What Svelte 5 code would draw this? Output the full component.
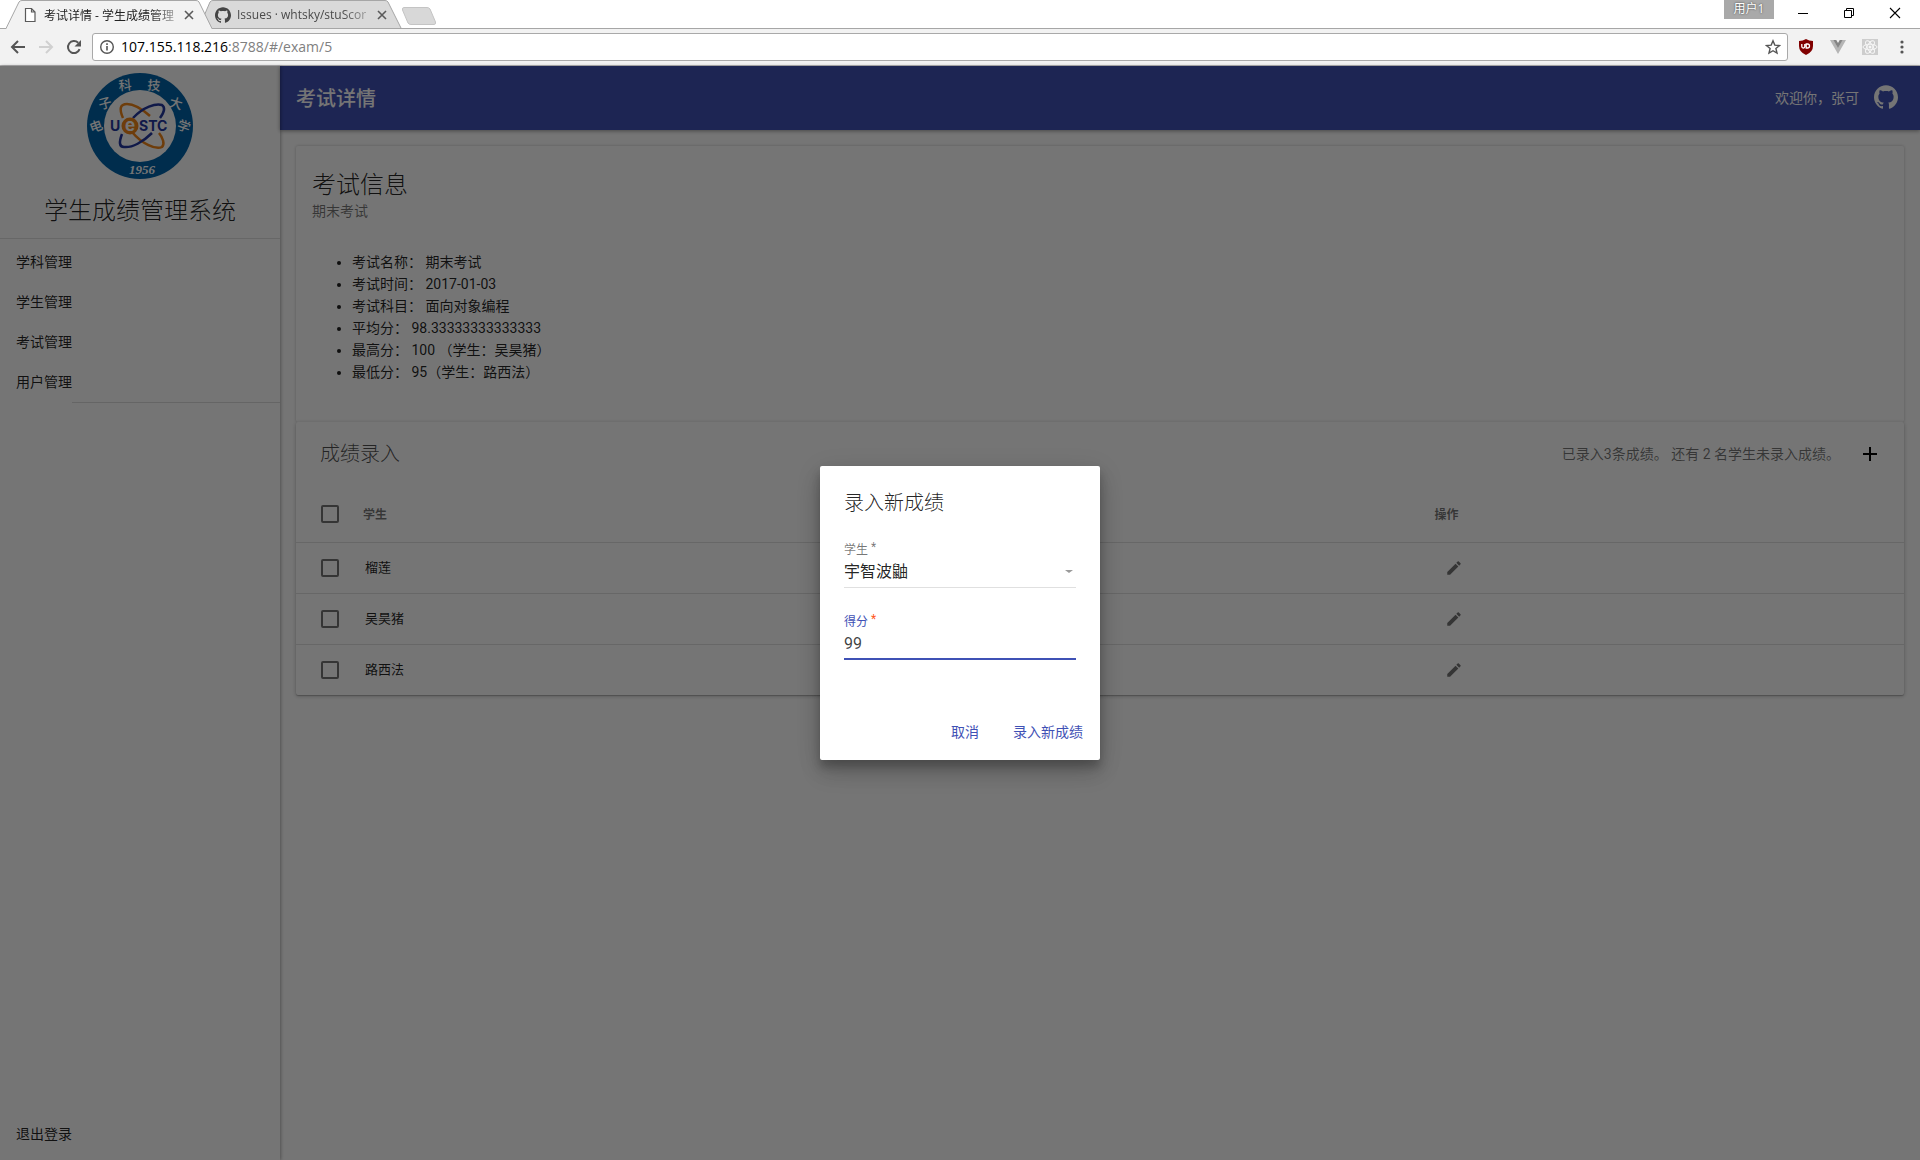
<script>
  const menu = ['学科管理', '学生管理', '考试管理', '用户管理'];
  const facts = [
    ['考试名称：', '期末考试'],
    ['考试时间：', '2017-01-03'],
    ['考试科目：', '面向对象编程'],
    ['平均分：', '98.33333333333333'],
    ['最高分：', '100 （学生：吴昊猪）'],
    ['最低分：', '95（学生：路西法）']
  ];
  const students = ['榴莲', '吴昊猪', '路西法'];
  const seal = [
    { ch: '电', x: 10, y: 54, r: -20 },
    { ch: '子', x: 19, y: 31, r: -15 },
    { ch: '科', x: 39, y: 13, r: -5 },
    { ch: '技', x: 68, y: 13, r: 5 },
    { ch: '大', x: 90, y: 31, r: 15 },
    { ch: '学', x: 98, y: 54, r: 20 }
  ];
  let student = $state('宇智波鼬');
  let score = $state('99');
</script>

{#snippet github(size)}
  <svg width={size} height={size} viewBox="0 0 24 24" fill="currentColor" aria-hidden="true">
    <path d="M12 .297c-6.63 0-12 5.373-12 12 0 5.303 3.438 9.8 8.205 11.385.6.113.82-.258.82-.577 0-.285-.01-1.04-.015-2.04-3.338.724-4.042-1.61-4.042-1.61C4.422 18.07 3.633 17.7 3.633 17.7c-1.087-.744.084-.729.084-.729 1.205.084 1.838 1.236 1.838 1.236 1.07 1.835 2.809 1.305 3.495.998.108-.776.417-1.305.76-1.605-2.665-.3-5.466-1.332-5.466-5.93 0-1.31.465-2.38 1.235-3.22-.135-.303-.54-1.523.105-3.176 0 0 1.005-.322 3.3 1.23.96-.267 1.98-.399 3-.405 1.02.006 2.04.138 3 .405 2.28-1.552 3.285-1.23 3.285-1.23.645 1.653.24 2.873.12 3.176.765.84 1.23 1.91 1.23 3.22 0 4.61-2.805 5.625-5.475 5.92.42.36.81 1.096.81 2.22 0 1.606-.015 2.896-.015 3.286 0 .315.21.69.825.57C20.565 22.092 24 17.592 24 12.297c0-6.627-5.373-12-12-12" />
  </svg>
{/snippet}

{#snippet cross()}
  <svg width="10" height="10" viewBox="0 0 10 10" aria-hidden="true">
    <path d="M1 1l8 8M9 1l-8 8" stroke="#5a5a5a" stroke-width="1.6" />
  </svg>
{/snippet}

<div class="window">
  <header class="chrome">
    <div class="strip">
      <div class="tab active">
        <svg class="shape" viewBox="0 0 206 29" aria-hidden="true">
          <path d="M0 29L13 2Q14 .5 16 .5H190Q192 .5 193 2L206 29Z" fill="#f2f2f2" />
          <path d="M0 28.5L13 2Q14 .5 16 .5H190Q192 .5 193 2L206 28.5" fill="none" stroke="#a6a6a6" />
        </svg>
        <svg class="favicon" width="16" height="16" viewBox="0 0 16 16" aria-hidden="true">
          <path d="M3.5 1.5h6l3.500 3.500v9.500h-9.500zM9.500 1.500v3.500h3.500" fill="#fff" stroke="#5a5a5a" stroke-width="1.200" />
        </svg>
        <span class="tab-title">考试详情 - 学生成绩管理</span>
        <button class="plain" aria-label="关闭标签页">{@render cross()}</button>
      </div>
      <div class="tab">
        <svg class="shape" viewBox="0 0 206 29" aria-hidden="true">
          <path d="M6 28L1 16L7 2Q8 .5 10 .5H182Q184 .5 185 2L198 28" fill="#d9d9d9" stroke="#a6a6a6" />
        </svg>
        <span class="favicon dark">{@render github(16)}</span>
        <span class="tab-title">Issues · whtsky/stuScor</span>
        <button class="plain" aria-label="关闭标签页">{@render cross()}</button>
      </div>
      <button class="plain new-tab" aria-label="打开新的标签页">
        <svg width="36" height="18" viewBox="0 0 36 18" aria-hidden="true">
          <path d="M3 .5H26Q28 .5 29 2L34.500 15Q35 17.500 33 17.500H10Q8 17.500 7 16L1.500 3Q1 .5 3 .5Z" fill="#d8d8d8" stroke="#c4c4c4" />
        </svg>
      </button>
      <div class="controls">
        <span class="user">用户1</span>
        <button class="plain" aria-label="最小化">
          <svg width="12" height="12" viewBox="0 0 12 12"><path d="M1 6.500h10" stroke="#000" /></svg>
        </button>
        <button class="plain" aria-label="还原">
          <svg width="12" height="12" viewBox="0 0 12 12"><path d="M1.500 3.500h7v7h-7zM3.500 3.500v-2h7v7h-2" fill="none" stroke="#000" /></svg>
        </button>
        <button class="plain" aria-label="关闭">
          <svg width="12" height="12" viewBox="0 0 12 12"><path d="M1 1l10 10M11 1L1 11" stroke="#000" stroke-width="1.100" /></svg>
        </button>
      </div>
    </div>
    <div class="toolbar">
      <button class="plain nav" aria-label="后退">
        <svg width="16" height="16" viewBox="0 0 16 16"><path d="M15 8H2.500M8 2L2 8l6 6" fill="none" stroke="#555" stroke-width="2" /></svg>
      </button>
      <button class="plain nav" aria-label="前进">
        <svg width="16" height="16" viewBox="0 0 16 16"><path d="M1 8h12.500M8 2l6 6-6 6" fill="none" stroke="#d0d0d0" stroke-width="2" /></svg>
      </button>
      <button class="plain nav" aria-label="重新加载">
        <svg width="16" height="16" viewBox="0 0 16 16"><path d="M13.600 10.200A6 6 0 1 1 12.200 3.800" fill="none" stroke="#555" stroke-width="2" /><path d="M15 1v6.500H8.500z" fill="#555" /></svg>
      </button>
      <div class="omnibox">
        <svg width="16" height="16" viewBox="0 0 16 16" aria-hidden="true"><circle cx="8" cy="8" r="6.300" fill="none" stroke="#555" stroke-width="1.400" /><path d="M8 7v4.500M8 4.300v1.700" stroke="#555" stroke-width="1.600" /></svg>
        <span class="url">107.155.118.216<i>:8788/#/exam/5</i></span>
        <button class="plain" aria-label="收藏">
          <svg width="16" height="16" viewBox="0 0 16 16"><path d="M8 1.800l1.800 4.300 4.700.4-3.600 3 1.100 4.600L8 11.700l-4 2.400 1.100-4.600-3.600-3 4.700-.4z" fill="none" stroke="#555" stroke-width="1.400" /></svg>
        </button>
      </div>
      <div class="extensions">
        <svg width="16" height="16" viewBox="0 0 16 16" aria-hidden="true"><path d="M8 0Q11 2 15 2V7Q15 13 8 16Q1 13 1 7V2Q5 2 8 0Z" fill="#800000" /><path d="M3.800 5v2.500a1.500 1.500 0 0 0 3 0V5M8.200 5v4h1.300a2 2 0 0 0 0-4z" fill="none" stroke="#fff" stroke-width="1.300" /></svg>
        <svg width="16" height="16" viewBox="0 0 16 16" aria-hidden="true"><path d="M0 1h3.500L8 8.500 12.500 1H16L8 15z" fill="#b5b5b5" /><path d="M3.300 1h3L8 4l1.700-3h3L8 9z" fill="#858585" /></svg>
        <svg width="16" height="16" viewBox="0 0 16 16" aria-hidden="true"><path d="M0 0h16v16H0z" fill="#cdcdcd" /><g fill="none" stroke="#f7f7f7" stroke-width="1"><ellipse cx="8" cy="8" rx="7" ry="2.800" /><ellipse cx="8" cy="8" rx="7" ry="2.800" transform="rotate(60 8 8)" /><ellipse cx="8" cy="8" rx="7" ry="2.800" transform="rotate(120 8 8)" /></g><circle cx="8" cy="8" r="1.500" fill="#f7f7f7" /></svg>
        <svg width="16" height="16" viewBox="0 0 16 16" aria-hidden="true"><g fill="#555"><circle cx="8" cy="3" r="1.600" /><circle cx="8" cy="8" r="1.600" /><circle cx="8" cy="13" r="1.600" /></g></svg>
      </div>
    </div>
  </header>

  <div class="app">
    <aside>
      <div class="brand">
        <svg width="108" height="108" viewBox="0 0 108 108" role="img" aria-label="UESTC 1956">
          <circle cx="54" cy="54" r="53" fill="#0062a8" />
          <circle cx="54" cy="54" r="36" fill="#fff" />
          <g fill="none" stroke-width="2.500">
            <path d="M37 46C33 37 34 32 41 32C48 32 56 37 64 44" stroke="#f08519" />
            <path d="M47 46C57 35 70 31 76 33C80 36 77 42 74 46" stroke="#2438a0" />
            <path d="M46 60C56 72 70 78 76 75C79 72 77 66 73 61" stroke="#f08519" />
            <path d="M36 62C33 70 33 75 38 75C46 76 57 70 66 61" stroke="#2438a0" />
          </g>
          <g fill="#2438a0" class="wordmark">
            <text x="24" y="59">U</text>
            <text x="53" y="59">STC</text>
          </g>
          <circle cx="44" cy="54" r="8.500" fill="#f08519" />
          <text x="44" y="59" class="e">e</text>
          {#each seal as s}
            <text class="seal" x={s.x} y={s.y + 5} transform="rotate({s.r} {s.x} {s.y})">{s.ch}</text>
          {/each}
          <text x="56" y="102" class="year">1956</text>
        </svg>
        <h1>学生成绩管理系统</h1>
      </div>
      <nav>
        {#each menu as item}
          <a href="#/{item}">{item}</a>
        {/each}
      </nav>
      <hr />
      <a class="logout" href="#/logout">退出登录</a>
    </aside>

    <main>
      <div class="appbar">
        <h2>考试详情</h2>
        <span>欢迎你，张可</span>
        <a href="#/github" aria-label="GitHub">{@render github(24)}</a>
      </div>
      <div class="content">
        <section class="card info">
          <h3>考试信息</h3>
          <p>期末考试</p>
          <ul>
            {#each facts as [name, value]}
              <li>{name} {value}</li>
            {/each}
          </ul>
        </section>
        <section class="card scores">
          <div class="card-bar">
            <h3>成绩录入</h3>
            <span>已录入3条成绩。 还有 2 名学生未录入成绩。</span>
            <button class="plain add" aria-label="录入新成绩">
              <svg width="24" height="24" viewBox="0 0 24 24"><path d="M19 13h-6v6h-2v-6H5v-2h6V5h2v6h6v2z" /></svg>
            </button>
          </div>
          <table>
            <thead>
              <tr>
                <th class="check"><input type="checkbox" aria-label="全选" /></th>
                <th>学生</th>
                <th class="ops">操作</th>
              </tr>
            </thead>
            <tbody>
              {#each students as name}
                <tr>
                  <td class="check"><input type="checkbox" aria-label={name} /></td>
                  <td class="name">{name}</td>
                  <td class="ops">
                    <button class="plain edit" aria-label="编辑{name}">
                      <svg width="18" height="18" viewBox="0 0 24 24" fill="#757575"><path d="M3 17.250V21h3.750L17.810 9.940l-3.750-3.750L3 17.250zM20.710 7.040c.39-.39.39-1.020 0-1.410l-2.340-2.340c-.39-.39-1.020-.39-1.410 0l-1.830 1.830 3.750 3.750 1.830-1.830z" /></svg>
                    </button>
                  </td>
                </tr>
              {/each}
            </tbody>
          </table>
        </section>
      </div>
    </main>

    <div class="overlay">
      <form class="dialog" role="dialog" aria-labelledby="dialog-title" onsubmit={(e) => e.preventDefault()}>
        <h3 id="dialog-title">录入新成绩</h3>
        <div class="field">
          <label for="student">学生<sup>*</sup></label>
          <div class="select">
            <select id="student" bind:value={student}>
              <option>宇智波鼬</option>
            </select>
            <svg width="8" height="4" viewBox="0 0 8 4" aria-hidden="true"><path d="M0 0h8L4 3z" fill="#9a9a9a" /></svg>
          </div>
        </div>
        <div class="field focused">
          <label for="score">得分<sup>*</sup></label>
          <input id="score" type="text" bind:value={score} />
        </div>
        <div class="actions">
          <button type="button">取消</button>
          <button type="submit">录入新成绩</button>
        </div>
      </form>
    </div>
  </div>
</div>

<style>
  :global(body) {
    margin: 0;
  }
  * {
    box-sizing: border-box;
  }
  svg {
    display: block;
  }
  h1, h2, h3, p, ul {
    margin: 0;
    font-weight: 400;
  }
  .window {
    display: flex;
    flex-direction: column;
    min-height: 100vh;
    font-family: Roboto, "Noto Sans CJK SC", sans-serif;
    font-size: 14px;
    color: rgba(0, 0, 0, 0.87);
  }
  .plain {
    display: grid;
    place-items: center;
    border: 0;
    padding: 0;
    background: none;
  }

  .chrome {
    font-family: "Open Sans", "Noto Sans CJK SC", sans-serif;
    background: #f2f2f2;
    border-bottom: 1px solid #b2b1b2;
  }
  .strip {
    display: flex;
    height: 29px;
    padding-left: 6px;
    background: #fff;
    box-shadow: inset 0 -1px #a6a6a6;
  }
  .tab {
    position: relative;
    display: flex;
    align-items: center;
    width: 206px;
    height: 29px;
    padding: 0 18px 0 16px;
    font-size: 12px;
    color: #4a4a4a;
  }
  .tab + .tab {
    margin-left: -9px;
    padding-left: 12px;
    padding-right: 22px;
  }
  .tab.active {
    z-index: 1;
    color: #222;
  }
  .tab > * {
    position: relative;
  }
  .tab .shape {
    position: absolute;
    inset: 0;
    width: 100%;
    height: 100%;
  }
  .favicon {
    flex: none;
    margin-right: 6px;
  }
  .dark {
    color: #444;
  }
  .tab-title {
    flex: 1;
    white-space: nowrap;
    mask-image: linear-gradient(to right, #000 75%, rgba(0, 0, 0, 0.15));
  }
  .new-tab {
    align-self: flex-start;
    margin: 7px 0 0 -8px;
  }
  .controls {
    display: flex;
    align-items: flex-start;
    margin-left: auto;
    padding-right: 2px;
  }
  .controls .plain {
    width: 46px;
    height: 26px;
  }
  .user {
    width: 50px;
    height: 19px;
    margin-right: 6px;
    background: #a9a9a9;
    color: #fff;
    font-size: 12px;
    line-height: 18px;
    text-align: center;
    text-shadow: 0 0 2px #333;
  }
  .toolbar {
    display: flex;
    align-items: center;
    height: 36px;
    padding: 0 10px;
  }
  .nav {
    width: 16px;
    margin-right: 12px;
  }
  .nav + .nav + .nav {
    margin-right: 10px;
  }
  .omnibox {
    flex: 1;
    display: flex;
    align-items: center;
    height: 28px;
    padding: 0 6px;
    background: #fff;
    border: 1px solid #a9a9a9;
    border-radius: 3px;
  }
  .url {
    flex: 1;
    margin-left: 6px;
    font-size: 14px;
    line-height: 20px;
    color: #000;
  }
  .url i {
    font-style: normal;
    color: #808080;
  }
  .extensions {
    display: flex;
    gap: 16px;
    margin-left: 10px;
  }

  .app {
    position: relative;
    flex: 1;
    display: flex;
    background: #fff;
  }
  aside {
    display: flex;
    flex-direction: column;
    flex: none;
    width: 280px;
    padding-bottom: 6px;
    box-shadow: 1px 0 3px rgba(0, 0, 0, 0.3);
    z-index: 1;
  }
  .brand {
    display: flex;
    flex-direction: column;
    align-items: center;
    gap: 11px;
    padding: 6px 0 7px;
    border-bottom: 1px solid #e0e0e0;
  }
  h1 {
    font-size: 24px;
    line-height: 40px;
    font-weight: 300;
  }
  nav {
    padding-top: 3px;
  }
  aside a {
    display: block;
    padding: 0 16px;
    line-height: 40px;
    color: rgba(0, 0, 0, 0.87);
    text-decoration: none;
  }
  hr {
    width: 208px;
    margin: 0 0 0 auto;
    border: 0;
    border-top: 1px solid #dcdcdc;
  }
  .logout {
    margin-top: auto;
  }
  .wordmark {
    font: 700 14px "Inter", sans-serif;
  }
  .e {
    font: 700 17px "Inter", sans-serif;
    fill: #fff;
    text-anchor: middle;
  }
  .seal {
    font: 500 13px "Noto Sans CJK SC", sans-serif;
    fill: #fff;
    text-anchor: middle;
  }
  .year {
    font: italic 700 13px "Liberation Serif", serif;
    fill: #fff;
    text-anchor: middle;
  }

  main {
    flex: 1;
    min-width: 0;
  }
  .appbar {
    display: flex;
    align-items: center;
    height: 64px;
    padding: 0 22px 2px 16px;
    background: #3f51b5;
    color: #fff;
    box-shadow: 0 1px 4px rgba(0, 0, 0, 0.4);
  }
  h2 {
    flex: 1;
    font-size: 20px;
    font-weight: 500;
  }
  .appbar a {
    margin-left: 15px;
    color: #fff;
  }
  .content {
    padding: 16px;
  }
  .card {
    border-radius: 2px;
    box-shadow: 0 1px 4px rgba(0, 0, 0, 0.25), 0 1px 1px rgba(0, 0, 0, 0.2);
  }
  .info {
    padding: 20px 16px 39px;
    box-shadow: 0 0 3px rgba(0, 0, 0, 0.25);
  }
  .scores {
    position: relative;
    background: #fff;
  }
  .info h3 {
    font-size: 24px;
    line-height: 38px;
    font-weight: 300;
  }
  .info p {
    line-height: 14px;
    color: rgba(0, 0, 0, 0.54);
  }
  ul {
    padding: 33px 0 0 40px;
    line-height: 22px;
  }
  .card-bar {
    display: flex;
    align-items: center;
    height: 64px;
    padding: 0 22px 0 24px;
    color: rgba(0, 0, 0, 0.54);
  }
  .card-bar h3 {
    flex: 1;
    font-size: 20px;
    font-weight: 300;
    color: rgba(0, 0, 0, 0.7);
  }
  .card-bar h3, .card-bar span {
    padding-bottom: 3px;
  }
  .add {
    margin-left: 18px;
  }
  table {
    width: 100%;
    table-layout: fixed;
    border-collapse: collapse;
    text-align: left;
  }
  th, td {
    padding: 0;
    height: 51px;
    font-size: 13px;
  }
  th {
    height: 56px;
    font-size: 12px;
    color: rgba(0, 0, 0, 0.54);
  }
  tbody tr {
    border-top: 1px solid #e0e0e0;
  }
  .check {
    width: 67px;
    padding-left: 25px;
  }
  .ops {
    width: 29.2%;
  }
  .name {
    padding: 0 0 3px 2px;
  }
  .check input {
    appearance: none;
    display: block;
    width: 18px;
    height: 18px;
    margin: 0;
    border: 2px solid #757575;
    border-radius: 2px;
  }
  .edit {
    width: 40px;
    height: 36px;
  }

  .overlay {
    position: absolute;
    inset: 0;
    z-index: 2;
    display: grid;
    place-items: center;
    background: rgba(0, 0, 0, 0.54);
  }
  .dialog {
    width: 280px;
    padding: 24px 24px 8px;
    background: #fff;
    border-radius: 2px;
    box-shadow: 0 7px 9px rgba(0, 0, 0, 0.2), 0 14px 21px rgba(0, 0, 0, 0.14), 0 5px 26px rgba(0, 0, 0, 0.12);
  }
  .dialog h3 {
    font-size: 20px;
    line-height: 26px;
    font-weight: 300;
    margin-bottom: 26px;
  }
  .field {
    display: flex;
    flex-direction: column;
    height: 46px;
    margin-bottom: 26px;
    border-bottom: 1px solid #e0e0e0;
  }
  label {
    font-size: 12px;
    line-height: 16px;
    color: rgba(0, 0, 0, 0.54);
  }
  sup {
    margin-left: 3px;
    line-height: 0;
    font-size: 12px;
    vertical-align: 3px;
  }
  .select {
    display: flex;
    align-items: center;
    padding-right: 3px;
  }
  select, .field input {
    appearance: none;
    flex: 1;
    padding: 0;
    border: 0;
    outline: 0;
    background: none;
    font: inherit;
    font-size: 16px;
    line-height: 28px;
    color: rgba(0, 0, 0, 0.87);
  }
  .focused {
    border-bottom: 2px solid #3f51b5;
  }
  .focused label {
    color: #3f51b5;
  }
  .focused sup {
    color: #ff5722;
  }
  .field input {
    min-height: 0;
    color: rgba(0, 0, 0, 0.75);
  }
  .actions {
    display: flex;
    justify-content: flex-end;
    gap: 8px;
    margin: 53px -15px 0 0;
    padding-bottom: 3px;
  }
  .actions button {
    min-width: 64px;
    height: 36px;
    padding: 0 8px;
    border: 0;
    background: none;
    font: inherit;
    color: #3f51b5;
  }
</style>
